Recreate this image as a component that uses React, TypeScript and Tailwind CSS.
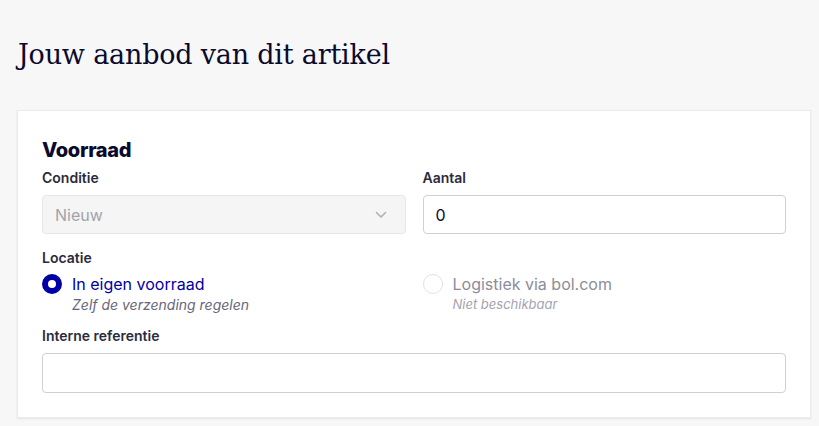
import React, { useState } from 'react';

const sans = { fontFamily: 'Inter, "Noto Sans", sans-serif' };

const Radio: React.FC<{ checked?: boolean; disabled?: boolean }> = ({ checked, disabled }) => (
    <span
        className={
            checked
                ? 'mt-[1px] h-5 w-5 shrink-0 rounded-full border-[6px] border-[#0000a4] bg-white'
                : 'mt-[1px] h-5 w-5 shrink-0 rounded-full border border-[#e2e2e6] bg-white'
        }
        aria-disabled={disabled}
    />
);

const App: React.FC = () => {
    const [aantal, setAantal] = useState('0');
    const [ref, setRef] = useState('');

    return (
        <div className="min-h-screen w-[819px] bg-[#f7f7f7] pl-[17px] pr-2 pt-[35px] text-[#0a0a2d]" style={sans}>
            <h1 className="pl-[1px] text-[27px] leading-[40px] tracking-[-0.2px] text-[#0a0a2d]" style={{ fontFamily: '"DejaVu Serif", "Liberation Serif", serif' }}>
                Jouw aanbod van dit artikel
            </h1>

            <div className="mt-[35px] w-[794px] border border-[#ebebeb] bg-white px-6 pb-6 pt-[26px] shadow-[0_1px_2px_rgba(0,0,0,0.08)]">
                <h2 className="text-[20px] font-extrabold leading-[26px] tracking-[-0.3px] text-[#0a0a2d]">Voorraad</h2>

                <div className="mt-[6px] grid grid-cols-2 gap-x-[17px]">
                    <div>
                        <label className="block text-[14px] font-semibold leading-[18px] text-[#2b2b3d]">Conditie</label>
                        <div className="mt-[8px] flex h-[39px] items-center justify-between rounded border border-[#e6e6e6] bg-[#f5f5f5] pl-3 pr-[18px]">
                            <span className="text-[16px] text-[#a3a3ab]">Nieuw</span>
                            <svg width="12" height="8" viewBox="0 0 12 8" fill="none">
                                <path d="M1.5 1.5 6 6l4.5-4.5" stroke="#b0b0b6" strokeWidth="1.6" strokeLinecap="round" strokeLinejoin="round" />
                            </svg>
                        </div>
                    </div>
                    <div>
                        <label className="block text-[14px] font-semibold leading-[18px] text-[#2b2b3d]">Aantal</label>
                        <input
                            value={aantal}
                            onChange={(e) => setAantal(e.target.value)}
                            className="mt-[8px] block h-[39px] w-full rounded border border-[#cfcfd4] bg-white px-3 text-[16px] text-[#0a0a2d] outline-none"
                        />
                    </div>
                </div>

                <label className="mt-[15px] block text-[14px] font-semibold leading-[18px] text-[#2b2b3d]">Locatie</label>
                <div className="mt-[6px] grid grid-cols-2 gap-x-[17px]">
                    <div className="flex gap-[10px]">
                        <Radio checked />
                        <div>
                            <div className="text-[16px] leading-[22px] text-[#0000a4]">In eigen voorraad</div>
                            <div className="text-[14px] italic leading-[20px] text-[#66667a]">Zelf de verzending regelen</div>
                        </div>
                    </div>
                    <div className="flex gap-[10px]">
                        <Radio disabled />
                        <div>
                            <div className="text-[16px] leading-[22px] text-[#8c8c9a]">Logistiek via bol.com</div>
                            <div className="text-[13px] italic leading-[18px] text-[#a3a3ae]">Niet beschikbaar</div>
                        </div>
                    </div>
                </div>

                <label className="mt-[12px] block text-[14px] font-semibold leading-[18px] text-[#2b2b3d]">Interne referentie</label>
                <input
                    value={ref}
                    onChange={(e) => setRef(e.target.value)}
                    className="mt-[8px] block h-[40px] w-full rounded border border-[#cfcfd4] bg-white px-3 text-[16px] outline-none"
                />
            </div>
        </div>
    );
};

export default App;
